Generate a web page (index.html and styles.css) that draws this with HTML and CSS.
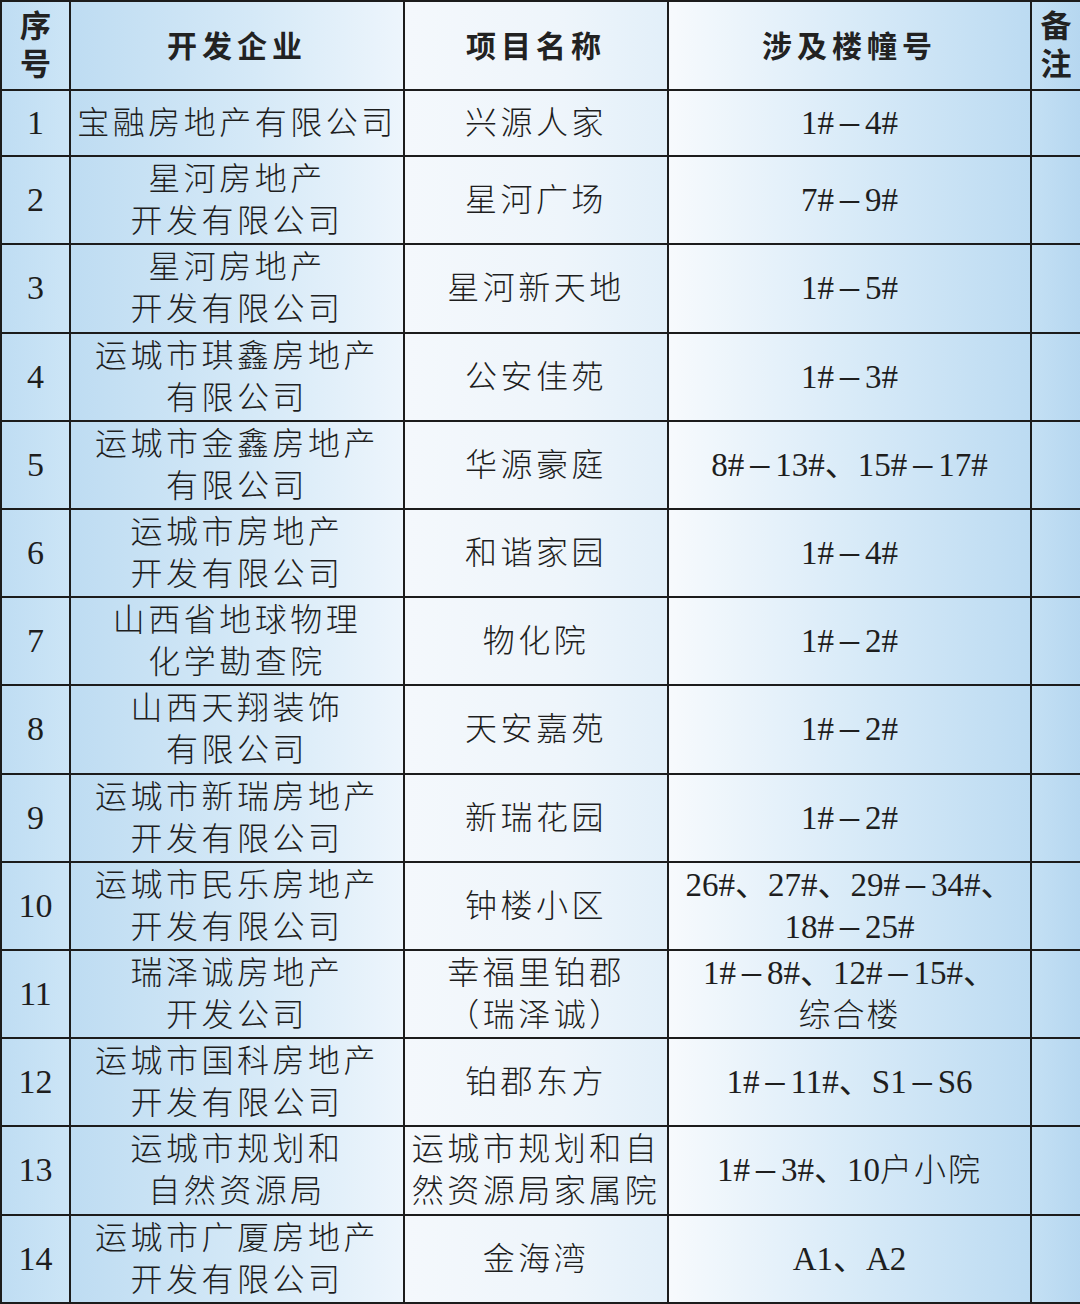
FILE: index.html
```html
<!DOCTYPE html>
<html lang="zh-CN">
<head>
<meta charset="utf-8">
<title>项目表</title>
<link rel="stylesheet" href="styles.css">
</head>
<body>
<table class="sheet">
  <colgroup>
    <col class="w1"><col class="w2"><col class="w3"><col class="w4"><col class="w5">
  </colgroup>
  <thead>
    <tr class="head">
      <th class="vert">序<br>号</th>
      <th>开发企业</th>
      <th>项目名称</th>
      <th>涉及楼幢号</th>
      <th class="vert">备<br>注</th>
    </tr>
  </thead>
  <tbody>
    <tr class="short"><td>1</td><td>宝融房地产有限公司</td><td>兴源人家</td><td class="num">1#<span class="dash">–</span>4#</td><td></td></tr>
    <tr><td>2</td><td>星河房地产<br>开发有限公司</td><td>星河广场</td><td class="num">7#<span class="dash">–</span>9#</td><td></td></tr>
    <tr><td>3</td><td>星河房地产<br>开发有限公司</td><td>星河新天地</td><td class="num">1#<span class="dash">–</span>5#</td><td></td></tr>
    <tr><td>4</td><td>运城市琪鑫房地产<br>有限公司</td><td>公安佳苑</td><td class="num">1#<span class="dash">–</span>3#</td><td></td></tr>
    <tr><td>5</td><td>运城市金鑫房地产<br>有限公司</td><td>华源豪庭</td><td class="num">8#<span class="dash">–</span>13#、15#<span class="dash">–</span>17#</td><td></td></tr>
    <tr><td>6</td><td>运城市房地产<br>开发有限公司</td><td>和谐家园</td><td class="num">1#<span class="dash">–</span>4#</td><td></td></tr>
    <tr><td>7</td><td>山西省地球物理<br>化学勘查院</td><td>物化院</td><td class="num">1#<span class="dash">–</span>2#</td><td></td></tr>
    <tr><td>8</td><td>山西天翔装饰<br>有限公司</td><td>天安嘉苑</td><td class="num">1#<span class="dash">–</span>2#</td><td></td></tr>
    <tr><td>9</td><td>运城市新瑞房地产<br>开发有限公司</td><td>新瑞花园</td><td class="num">1#<span class="dash">–</span>2#</td><td></td></tr>
    <tr><td>10</td><td>运城市民乐房地产<br>开发有限公司</td><td>钟楼小区</td><td class="num">26#、27#、29#<span class="dash">–</span>34#、<br>18#<span class="dash">–</span>25#</td><td></td></tr>
    <tr><td>11</td><td>瑞泽诚房地产<br>开发公司</td><td>幸福里铂郡<br>（瑞泽诚）</td><td class="num">1#<span class="dash">–</span>8#、12#<span class="dash">–</span>15#、<br><span class="cjk">综合楼</span></td><td></td></tr>
    <tr><td>12</td><td>运城市国科房地产<br>开发有限公司</td><td>铂郡东方</td><td class="num">1#<span class="dash">–</span>11#、S1<span class="dash">–</span>S6</td><td></td></tr>
    <tr><td>13</td><td>运城市规划和<br>自然资源局</td><td>运城市规划和自<br>然资源局家属院</td><td class="num">1#<span class="dash">–</span>3#、10<span class="cjk">户小院</span></td><td></td></tr>
    <tr><td>14</td><td>运城市广厦房地产<br>开发有限公司</td><td>金海湾</td><td class="num">A1、A2</td><td></td></tr>
  </tbody>
</table>
</body>
</html>
```
FILE: styles.css
```css
html, body {
  margin: 0;
  padding: 0;
  background: #ffffff;
}

.sheet {
  width: 1080px;
  height: 1304px;
  border-collapse: collapse;
  table-layout: fixed;
  font-family: "Liberation Serif", "Noto Sans CJK SC", serif;
  color: #1e1e1e;
}

.w1 { width: 69px; }
.w2 { width: 334px; }
.w3 { width: 264px; }
.w4 { width: 363px; }
.w5 { width: 50px; }

.sheet th,
.sheet td {
  border: 2px solid #1c1c1c;
  padding: 0;
  text-align: center;
  vertical-align: middle;
}

.sheet th {
  font-family: "Liberation Sans", "Noto Sans CJK SC", sans-serif;
  font-weight: 700;
  font-size: 30px;
  letter-spacing: 5px;
  line-height: 38px;
  color: #222;
  padding-top: 3px;
}

.sheet th.vert {
  letter-spacing: 0;
  font-size: 31px;
  line-height: 38px;
  padding-top: 0;
}

.head { height: 89px; }
.sheet tbody tr { height: 88px; }
.sheet tbody tr.short { height: 66px; }

.sheet td {
  font-size: 32px;
  font-weight: 300;
  line-height: 42px;
  letter-spacing: 3.5px;
  white-space: nowrap;
}

.sheet td:first-child {
  letter-spacing: 0;
  font-size: 34px;
  font-weight: 400;
}

.sheet td.num {
  letter-spacing: 0;
  font-size: 33px;
  font-weight: 400;
}

.sheet td.num .dash {
  font-size: 38px;
  line-height: 1;
  padding: 0 6px;
}

.sheet td.num .cjk {
  font-size: 32px;
  font-weight: 300;
  letter-spacing: 2px;
}

/* column backgrounds */
.sheet tr > :nth-child(1) {
  background: linear-gradient(to right, #bfddf3, #cce5f6);
}
.sheet tr > :nth-child(2) {
  background: linear-gradient(to right, #bedcf2, #d5e9f7 55%, #edf5fc);
}
.sheet tr > :nth-child(3) {
  background: linear-gradient(to right, #f4f8fc, #eef5fb 60%, #e2eff9);
}
.sheet tr > :nth-child(4) {
  background: linear-gradient(to right, #f7fafd, #d9ebf8 50%, #bcdbf2);
}
.sheet tr > :nth-child(5) {
  background: linear-gradient(to right, #c4e0f4, #b6d7f0);
}
```
